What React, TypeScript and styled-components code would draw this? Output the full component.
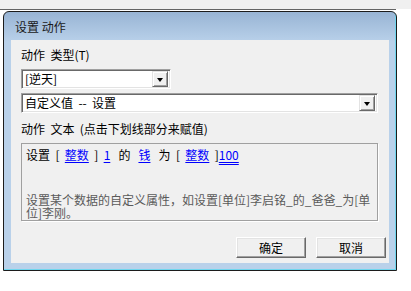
import styled, { createGlobalStyle } from "styled-components";

const GlobalStyle = createGlobalStyle`
  html, body {
    margin: 0;
    padding: 0;
    background: #ffffff;
    font-family: "Noto Sans CJK SC", "DejaVu Sans", sans-serif;
    font-size: 12px;
    color: #000;
  }
`;

const Page = styled.div`
  width: 411px;
  height: 291px;
  background: #fff;
  overflow: hidden;
`;

const TopStrip = styled.div`
  height: 9px;
  background: #f0f0f0;
`;

const TopLine = styled.div`
  width: 396px;
  height: 1px;
  background: #646464;
  margin-bottom: 1px;
`;

const Window = styled.div`
  margin-left: 3px;
  width: 392px;
  height: 258px;
  border: 1px solid #1c1c1c;
  border-radius: 6px 6px 0 0;
  background: linear-gradient(#98b4d4 0px, #b9d1ea 30px, #b9d1ea 100%);
  box-shadow: inset -1px -1px 0 #6fd6ee;
  display: flex;
  flex-direction: column;
`;

const TitleBar = styled.div`
  height: 28px;
  display: flex;
  align-items: center;
  padding-left: 11px;
  padding-top: 1px;
  box-sizing: border-box;
  font-size: 12px;
  color: #1a1a1a;
`;

const Content = styled.div`
  margin: 0 7px;
  height: 223px;
  background: #f0f0f0;
  padding: 9px 11px 0 10px;
  box-sizing: border-box;
  display: flex;
  flex-direction: column;
`;

const Label = styled.div<{ $top?: number }>`
  height: 12px;
  line-height: 12px;
  margin-top: ${(p) => p.$top ?? 0}px;
  white-space: pre;
`;

const Combo = styled.div<{ $width: string; $top: number }>`
  width: ${(p) => p.$width};
  height: 20px;
  margin-top: ${(p) => p.$top}px;
  box-sizing: border-box;
  background: #fff;
  border-top: 1px solid #a0a0a0;
  border-left: 1px solid #a0a0a0;
  border-bottom: 1px solid #ffffff;
  border-right: 1px solid #ffffff;
  box-shadow: inset 1px 1px 0 #696969, inset -1px -1px 0 #e3e3e3;
  display: flex;
  align-items: center;
  padding: 0 2px 0 3px;
`;

const ComboText = styled.span`
  flex: 1;
  line-height: 16px;
  white-space: pre;
`;

const DropButton = styled.div`
  width: 16px;
  height: 16px;
  box-sizing: border-box;
  background: #f0f0f0;
  border-top: 1px solid #e3e3e3;
  border-left: 1px solid #e3e3e3;
  border-bottom: 1px solid #696969;
  border-right: 1px solid #696969;
  box-shadow: inset 1px 1px 0 #fff, inset -1px -1px 0 #a0a0a0;
  display: flex;
  align-items: center;
  justify-content: center;
`;

const Arrow = styled.div`
  width: 0;
  height: 0;
  border-left: 3.5px solid transparent;
  border-right: 3.5px solid transparent;
  border-top: 4px solid #000;
  margin-top: 1px;
`;

const TextPanel = styled.div`
  margin-top: 8px;
  height: 78px;
  box-sizing: border-box;
  border: 1px solid #a0a0a0;
  box-shadow: 1px 1px 0 #fff;
  padding: 4px 4px 1px 4px;
  display: flex;
  flex-direction: column;
`;

const Sentence = styled.div`
  line-height: 14px;
  white-space: pre;
`;

const Link = styled.span<{ $double?: boolean }>`
  color: #0000ff;
  text-decoration: underline ${(p) => (p.$double ? "double" : "solid")};
  text-underline-offset: 2px;
`;

const Hint = styled.div`
  margin-top: auto;
  color: #5a5a5a;
  line-height: 13px;
`;

const ButtonRow = styled.div`
  margin-top: 16px;
  display: flex;
  justify-content: flex-end;
  gap: 10px;
  margin-right: -8px;
`;

const Button = styled.div`
  width: 70px;
  height: 21px;
  box-sizing: border-box;
  background: #f0f0f0;
  border-top: 1px solid #ffffff;
  border-left: 1px solid #ffffff;
  border-bottom: 1px solid #696969;
  border-right: 1px solid #696969;
  box-shadow: inset -1px -1px 0 #a0a0a0, inset 1px 1px 0 #e3e3e3;
  display: flex;
  align-items: center;
  justify-content: center;
  line-height: 12px;
`;

export default function App() {
  return (
    <Page>
      <GlobalStyle />
      <TopStrip />
      <TopLine />
      <Window>
        <TitleBar>设置 动作</TitleBar>
        <Content>
          <Label>动作  类型(T)</Label>
          <Combo $width="150px" $top={8}>
            <ComboText>[逆天]</ComboText>
            <DropButton>
              <Arrow />
            </DropButton>
          </Combo>
          <Combo $width="357px" $top={4}>
            <ComboText>自定义值  --  设置</ComboText>
            <DropButton>
              <Arrow />
            </DropButton>
          </Combo>
          <Label $top={10}>动作  文本  (点击下划线部分来赋值)</Label>
          <TextPanel>
            <Sentence>
              设置  [  <Link>整数</Link>  ]  <Link>1</Link>   的   <Link>钱</Link>   为  [  <Link>整数</Link>  ]<Link $double>100</Link>
            </Sentence>
            <Hint>
              设置某个数据的自定义属性，如设置[单位]李启铭_的_爸爸_为[单
              <br />
              位]李刚。
            </Hint>
          </TextPanel>
          <ButtonRow>
            <Button>确定</Button>
            <Button>取消</Button>
          </ButtonRow>
        </Content>
      </Window>
    </Page>
  );
}
